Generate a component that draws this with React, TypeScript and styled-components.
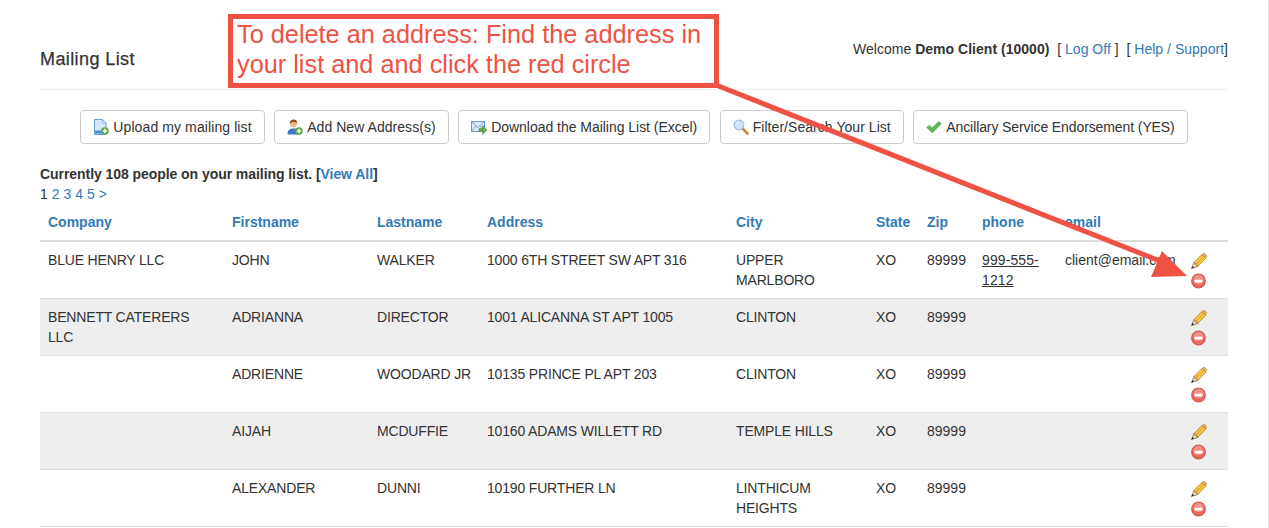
import React from "react";
import styled, { createGlobalStyle } from "styled-components";

const Global = createGlobalStyle`
  html, body { margin: 0; padding: 0; background: #fff; height: 528px; overflow: hidden; }
  body { font-family: "Liberation Sans", Arial, sans-serif; font-size: 14px; line-height: 20px; color: #333; }
`;

const Page = styled.div`
  position: relative;
  width: 1269px;
  height: 528px;
  box-sizing: border-box;
  padding: 0 40px;
  border-right: 1px solid #e4e4e4;
  overflow: hidden;
`;
const Header = styled.header`
  display: flex;
  justify-content: space-between;
  align-items: flex-start;
  height: 90px;
  box-sizing: border-box;
  border-bottom: 1px solid #eee;
`;
const Title = styled.h4`
  margin: 49px 0 0;
  font-size: 18px;
  line-height: 20px;
  font-weight: 400;
  -webkit-text-stroke: 0.25px #333;
  letter-spacing: 0.4px;
`;
const Welcome = styled.div`
  margin-top: 39px;
  white-space: pre;
  letter-spacing: 0.02px;
`;
const Link = styled.a`
  color: #337ab7;
  text-decoration: none;
`;
const Toolbar = styled.nav`
  display: flex;
  justify-content: center;
  gap: 9.5px;
  margin-top: 20px;
`;
const Button = styled.button<{ $track: number }>`
  display: inline-flex;
  align-items: center;
  gap: 4px;
  height: 34px;
  box-sizing: border-box;
  padding: 0 12px;
  background: #fff;
  border: 1px solid #ccc;
  border-radius: 4px;
  font: inherit;
  letter-spacing: ${(p) => p.$track}px;
  color: #333;
  white-space: nowrap;
`;
const Summary = styled.div`
  margin-top: 20px;
  font-weight: 700;
  letter-spacing: -0.06px;
`;
const Pager = styled.div`
  letter-spacing: 0.02px;
`;
const Table = styled.table`
  width: 1188px;
  table-layout: fixed;
  border-collapse: separate;
  border-spacing: 0;
`;
const Th = styled.th`
  padding: 8px;
  text-align: left;
  font-weight: 700;
  color: #337ab7;
  border-bottom: 2px solid #ddd;
  white-space: nowrap;
`;
const Row = styled.tr<{ $shaded: boolean }>`
  background: ${(p) => (p.$shaded ? "#eee" : "#fff")};
`;
const Td = styled.td<{ $tight?: boolean }>`
  padding: 8px;
  height: 40px;
  vertical-align: top;
  border-bottom: 1px solid #ddd;
  letter-spacing: ${(p) => (p.$tight ? "-0.17px" : "0")};
`;
const Phone = styled.a`
  color: #333;
  text-decoration: underline;
  letter-spacing: 0.1px;
`;
const Action = styled.span`
  display: flex;
  height: 20px;
  box-sizing: border-box;
  padding-top: 2px;
  align-items: center;
`;
const Annotation = styled.div`
  position: absolute;
  left: 228px;
  top: 14px;
  width: 491px;
  height: 74px;
  box-sizing: border-box;
  border: 5px solid #ef5244;
  padding: 0 4px 4px;
  font-size: 25.3px;
  line-height: 30px;
  color: #ef5244;
  white-space: nowrap;
  display: flex;
  flex-direction: column;
  justify-content: center;
`;
const ArrowLayer = styled.svg`
  position: absolute;
  left: 0;
  top: 0;
  pointer-events: none;
`;

const DocIcon = () => (
  <svg width="16" height="16" viewBox="0 0 16 16">
    <path d="M1.500.5h8l3.500 3.500v11.500h-11.500z" fill="#d5e6f8" stroke="#6c9fd6" />
    <path d="M9.500.5v3.500h3.500z" fill="#fff" stroke="#6c9fd6" strokeWidth=".7" />
    <rect x="2" y="11.500" width="7" height="3" fill="#4a8cd6" />
    <circle cx="12" cy="12" r="3.800" fill="#5aa845" />
    <path d="M12 9.800v4.400M9.800 12h4.400" stroke="#fff" strokeWidth="1.500" />
  </svg>
);
const UserIcon = () => (
  <svg width="16" height="16" viewBox="0 0 16 16">
    <path d="M.5 15.500c0-4.500 2-6 6.500-6s5.500 1.500 5.500 6z" fill="#3f78c4" />
    <circle cx="6.500" cy="4.500" r="3.700" fill="#eab88c" />
    <path d="M2.800 4.200C2.500-.5 10.500-1 10.200 4.200 8 2.500 5 3 2.800 4.200z" fill="#8a4f22" />
    <circle cx="12" cy="12" r="3.800" fill="#5aa845" />
    <path d="M12 9.800v4.400M9.800 12h4.400" stroke="#fff" strokeWidth="1.500" />
  </svg>
);
const MailIcon = () => (
  <svg width="16" height="16" viewBox="0 0 16 16">
    <rect x=".5" y="2.500" width="13" height="10" fill="#d9e9fa" stroke="#6b9bd3" />
    <path d="M.5 2.500l6.500 6 6.500-6M.5 12.500l4.500-5.500M13.500 12.500l-4.500-5.500" fill="none" stroke="#7ba6da" />
    <path d="M8 9.500h3.500v-3l4.500 4.500-4.500 4.500v-3H8z" fill="#66ad3f" stroke="#4a8a2b" strokeWidth=".5" />
  </svg>
);
const SearchIcon = () => (
  <svg width="16" height="16" viewBox="0 0 16 16">
    <path d="M9.500 9.500l5 5" stroke="#c78a3c" strokeWidth="2.600" strokeLinecap="round" />
    <circle cx="6" cy="6" r="4.800" fill="#cfe3f8" stroke="#9dbde0" strokeWidth="1.200" />
    <path d="M3.500 5.500a3 3 0 0 1 2.500-2.200" stroke="#fff" fill="none" />
  </svg>
);
const CheckIcon = () => (
  <svg width="16" height="16" viewBox="0 0 16 16">
    <path d="M.8 8.500l2.500-2.300 2.700 2.700L13 2.500l2.300 2.200L6.300 14z" fill="#62b85c" stroke="#4b9a4c" strokeWidth=".6" />
  </svg>
);
const PencilIcon = () => (
  <svg width="16" height="16" viewBox="0 0 16 16">
    <path d="M3 9.500L11 1.500l3.800 3.800-8 8z" fill="#f5c842" stroke="#b5852a" strokeWidth=".9" />
    <path d="M4.800 11.300l8-8" stroke="#e09a28" strokeWidth="1" />
    <path d="M11 1.500l1-1c.6-.5 1.200-.5 1.700 0l1.700 1.700c.4.500.4 1 0 1.500l-.8.900z" fill="#eaa77a" stroke="#b5852a" strokeWidth=".6" />
    <path d="M3 9.500L.5 15.500l6.300-2z" fill="#ecd3ac" stroke="#6b4a1f" strokeWidth=".6" />
    <path d="M.5 15.500l1-2.500 1.500 1.500z" fill="#222" />
  </svg>
);
const MinusIcon = () => (
  <svg width="16" height="16" viewBox="0 0 16 16">
    <circle cx="7.500" cy="8" r="6.800" fill="#e96a60" stroke="#d4574e" strokeWidth="1.200" />
    <circle cx="7.500" cy="6.500" r="4.800" fill="#f0908a" />
    <rect x="3.500" y="6.700" width="8" height="2.800" rx=".5" fill="#fff" />
  </svg>
);

const buttons = [
  { icon: <DocIcon />, label: "Upload my mailing list", track: 0.1 },
  { icon: <UserIcon />, label: "Add New Address(s)", track: 0.05 },
  { icon: <MailIcon />, label: "Download the Mailing List (Excel)", track: -0.03 },
  { icon: <SearchIcon />, label: "Filter/Search Your List", track: 0.05 },
  { icon: <CheckIcon />, label: "Ancillary Service Endorsement (YES)", track: -0.1 },
];
const columns = [
  { name: "Company", width: 184 },
  { name: "Firstname", width: 145 },
  { name: "Lastname", width: 110 },
  { name: "Address", width: 249 },
  { name: "City", width: 140 },
  { name: "State", width: 51 },
  { name: "Zip", width: 55 },
  { name: "phone", width: 83 },
  { name: "email", width: 126 },
  { name: "", width: 45 },
];
const rows = [
  ["BLUE HENRY LLC", "JOHN", "WALKER", "1000 6TH STREET SW APT 316", "UPPER MARLBORO", "XO", "89999", "999-555-1212", "client@email.com"],
  ["BENNETT CATERERS LLC", "ADRIANNA", "DIRECTOR", "1001 ALICANNA ST APT 1005", "CLINTON", "XO", "89999", "", ""],
  ["", "ADRIENNE", "WOODARD JR", "10135 PRINCE PL APT 203", "CLINTON", "XO", "89999", "", ""],
  ["", "AIJAH", "MCDUFFIE", "10160 ADAMS WILLETT RD", "TEMPLE HILLS", "XO", "89999", "", ""],
  ["", "ALEXANDER", "DUNNI", "10190 FURTHER LN", "LINTHICUM HEIGHTS", "XO", "89999", "", ""],
];

export default function App() {
  return (
    <Page>
      <Global />
      <Header>
        <Title>Mailing List</Title>
        <Welcome>
          Welcome <b>Demo Client (10000)</b>  [ <Link>Log Off</Link> ]  [ <Link>Help / Support</Link>]
        </Welcome>
      </Header>
      <Toolbar>
        {buttons.map((b) => (
          <Button key={b.label} $track={b.track}>
            {b.icon}
            {b.label}
          </Button>
        ))}
      </Toolbar>
      <Summary>
        Currently 108 people on your mailing list. [<Link>View All</Link>]
      </Summary>
      <Pager>
        1 <Link>2</Link> <Link>3</Link> <Link>4</Link> <Link>5</Link> <Link>&gt;</Link>
      </Pager>
      <Table>
        <colgroup>
          {columns.map((c, i) => (
            <col key={i} width={c.width} />
          ))}
        </colgroup>
        <thead>
          <tr>
            {columns.map((c, i) => (
              <Th key={i}>{c.name}</Th>
            ))}
          </tr>
        </thead>
        <tbody>
          {rows.map((r, i) => (
            <Row key={i} $shaded={i % 2 === 1}>
              {r.map((cell, j) => (
                <Td key={j} $tight={j < 5}>{j === 7 && cell ? <Phone>{cell}</Phone> : cell}</Td>
              ))}
              <Td>
                <Action><PencilIcon /></Action>
                <Action><MinusIcon /></Action>
              </Td>
            </Row>
          ))}
        </tbody>
      </Table>
      <Annotation>
        <span>To delete an address: Find the address in</span>
        <span>your list and and click the red circle</span>
      </Annotation>
      <ArrowLayer width="1269" height="528" viewBox="0 0 1269 528">
        <path d="M716 85L1170 265" stroke="#ef5244" strokeWidth="5" fill="none" />
        <path d="M1162 251L1187 276L1151 277z" fill="#ef5244" />
      </ArrowLayer>
    </Page>
  );
}
